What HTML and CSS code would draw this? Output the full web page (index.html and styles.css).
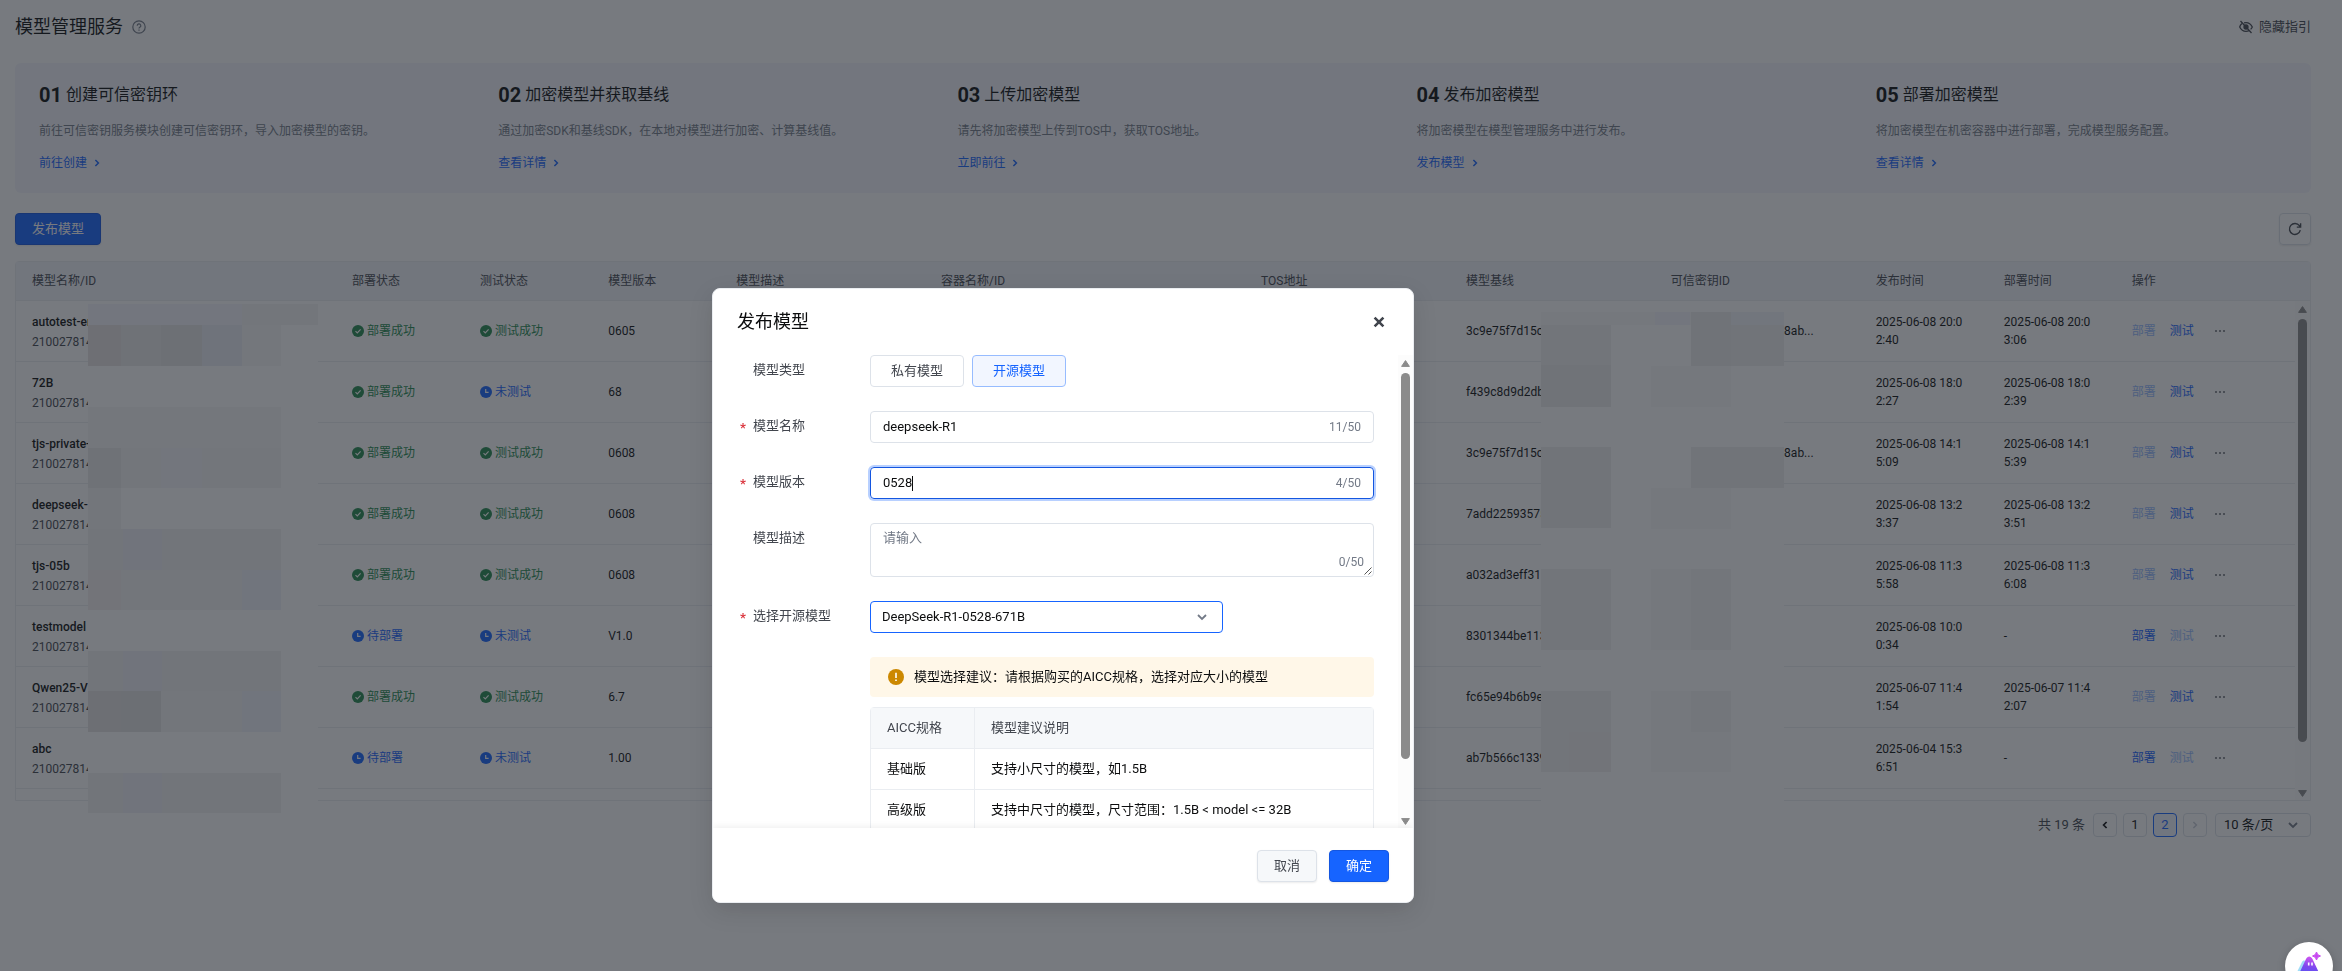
FILE: index.html
```html
<!DOCTYPE html>
<html lang="zh-CN">

<head>
    <meta charset="UTF-8">
    <meta name="viewport" content="width=device-width, initial-scale=1.0">
    <title>模型管理服务</title>
    <link rel="stylesheet" href="styles.css">
</head>

<body>

    <!-- 图标 -->
    <svg class="sprite" aria-hidden="true">
        <symbol id="i-ok" viewBox="0 0 12 12">
            <circle cx="6" cy="6" r="6" fill="currentColor" />
            <path d="M3.5 6.1l1.8 1.8 3.3-3.5" fill="none" stroke="#fff" stroke-width="1.2" />
        </symbol>
        <symbol id="i-wait" viewBox="0 0 12 12">
            <circle cx="6" cy="6" r="6" fill="currentColor" />
            <path d="M5.7 3v3.4h2.9" fill="none" stroke="#fff" stroke-width="1.2" />
        </symbol>
        <symbol id="i-right" viewBox="0 0 12 12">
            <path d="M4.4 3l3 3-3 3" fill="none" stroke="currentColor" stroke-width="1.5" />
        </symbol>
        <symbol id="i-left" viewBox="0 0 12 12">
            <path d="M7.6 3l-3 3 3 3" fill="none" stroke="currentColor" stroke-width="1.7" />
        </symbol>
        <symbol id="i-down" viewBox="0 0 12 12">
            <path d="M2 4l4 4 4-4" fill="none" stroke="currentColor" stroke-width="1.8" />
        </symbol>
        <symbol id="i-more" viewBox="0 0 12 12">
            <path d="M1.2 5.2h1.6v1.6H1.2zM5.2 5.2h1.6v1.6H5.2zM9.2 5.2h1.6v1.6H9.2z" fill="currentColor" />
        </symbol>
        <symbol id="i-up-arrow" viewBox="0 0 9 7">
            <path d="M4.5 0.6L8.4 6.4H.6z" fill="currentColor" stroke="currentColor" stroke-linejoin="round" />
        </symbol>
        <symbol id="i-down-arrow" viewBox="0 0 9 7">
            <path d="M4.5 6.4L.6.6h7.8z" fill="currentColor" stroke="currentColor" stroke-linejoin="round" />
        </symbol>
    </svg>

    <main class="page">
        <header class="page-header">
            <h1>模型管理服务</h1>
            <svg class="icon-14 help" viewBox="0 0 14 14" fill="none" stroke="currentColor" stroke-width="1.2">
                <circle cx="7" cy="7" r="6.2" />
                <path d="M5.2 5.7a1.8 1.8 0 1 1 2.6 1.6c-.6.3-.8.5-.8 1.2M7 9.4v1.3" />
            </svg>
            <button class="hide-guide" type="button">
                <svg class="icon-14" viewBox="0 0 14 14" fill="none" stroke="currentColor" stroke-width="1.3">
                    <path d="M2.9 3.6C1.8 4.5 1 5.8.7 7c1.4 2.9 3.6 4.3 6.3 4.3 1.1 0 2.1-.2 3-.7M5 2.9c.6-.1 1.3-.2 2-.2 2.7 0 4.9 1.400 6.300 4.300-.4.9-1 1.700-1.700 2.400" />
                    <circle cx="7" cy="7" r="2" fill="currentColor" />
                    <path d="M1.5 1l11 12" />
                </svg>
                隐藏指引
            </button>
        </header>

        <section class="guide">
            <div class="step">
                <h2><b>01</b>创建可信密钥环</h2>
                <p>前往可信密钥服务模块创建可信密钥环，导入加密模型的密钥。</p>
                <a href="#">前往创建<svg class="icon-12"><use href="#i-right" /></svg></a>
            </div>
            <div class="step">
                <h2><b>02</b>加密模型并获取基线</h2>
                <p>通过加密SDK和基线SDK，在本地对模型进行加密、计算基线值。</p>
                <a href="#">查看详情<svg class="icon-12"><use href="#i-right" /></svg></a>
            </div>
            <div class="step">
                <h2><b>03</b>上传加密模型</h2>
                <p>请先将加密模型上传到TOS中，获取TOS地址。</p>
                <a href="#">立即前往<svg class="icon-12"><use href="#i-right" /></svg></a>
            </div>
            <div class="step">
                <h2><b>04</b>发布加密模型</h2>
                <p>将加密模型在模型管理服务中进行发布。</p>
                <a href="#">发布模型<svg class="icon-12"><use href="#i-right" /></svg></a>
            </div>
            <div class="step">
                <h2><b>05</b>部署加密模型</h2>
                <p>将加密模型在机密容器中进行部署，完成模型服务配置。</p>
                <a href="#">查看详情<svg class="icon-12"><use href="#i-right" /></svg></a>
            </div>
        </section>

        <div class="toolbar">
            <button class="btn btn-primary" type="button">发布模型</button>
            <button class="btn btn-icon" type="button" aria-label="刷新">
                <svg class="icon-14" viewBox="0 0 14 14" fill="none" stroke="currentColor" stroke-width="1.4">
                    <path d="M12.3 8.2A5.5 5.5 0 1 1 11.4 3.7l1 1.2M12.6 1.2v3.9H8.8" />
                </svg>
            </button>
        </div>

        <div class="table-box">
            <table class="model-table">
                <colgroup>
                    <col class="w-250"><col class="w-100"><col class="w-100"><col class="w-100">
                    <col class="w-160"><col class="w-250"><col class="w-160"><col class="w-160">
                    <col class="w-160"><col class="w-100"><col class="w-100"><col class="w-140">
                </colgroup>
                <thead>
                    <tr>
                        <th>模型名称/ID</th>
                        <th>部署状态</th>
                        <th>测试状态</th>
                        <th>模型版本</th>
                        <th>模型描述</th>
                        <th>容器名称/ID</th>
                        <th>TOS地址</th>
                        <th>模型基线</th>
                        <th>可信密钥ID</th>
                        <th>发布时间</th>
                        <th>部署时间</th>
                        <th>操作</th>
                    </tr>
                </thead>
                <tbody>
                    <tr>
                        <td><strong>autotest-er</strong><span class="model-id">210027814</span></td>
                        <td><span class="tag ok"><svg class="icon-12"><use href="#i-ok" /></svg>部署成功</span></td>
                        <td><span class="tag ok"><svg class="icon-12"><use href="#i-ok" /></svg>测试成功</span></td>
                        <td>0605</td>
                        <td></td>
                        <td></td>
                        <td></td>
                        <td>3c9e75f7d15c</td>
                        <td class="key-id">-8ab...</td>
                        <td class="time">2025-06-08 20:02:40</td>
                        <td class="time">2025-06-08 20:03:06</td>
                        <td><div class="ops"><button type="button" disabled>部署</button><button type="button">测试</button><button type="button" class="more" aria-label="更多"><svg class="icon-12"><use href="#i-more" /></svg></button></div></td>
                    </tr>
                    <tr>
                        <td><strong>72B</strong><span class="model-id">210027814</span></td>
                        <td><span class="tag ok"><svg class="icon-12"><use href="#i-ok" /></svg>部署成功</span></td>
                        <td><span class="tag wait"><svg class="icon-12"><use href="#i-wait" /></svg>未测试</span></td>
                        <td>68</td>
                        <td></td>
                        <td></td>
                        <td></td>
                        <td>f439c8d9d2db</td>
                        <td></td>
                        <td class="time">2025-06-08 18:02:27</td>
                        <td class="time">2025-06-08 18:02:39</td>
                        <td><div class="ops"><button type="button" disabled>部署</button><button type="button">测试</button><button type="button" class="more" aria-label="更多"><svg class="icon-12"><use href="#i-more" /></svg></button></div></td>
                    </tr>
                    <tr>
                        <td><strong>tjs-private-</strong><span class="model-id">210027814</span></td>
                        <td><span class="tag ok"><svg class="icon-12"><use href="#i-ok" /></svg>部署成功</span></td>
                        <td><span class="tag ok"><svg class="icon-12"><use href="#i-ok" /></svg>测试成功</span></td>
                        <td>0608</td>
                        <td></td>
                        <td></td>
                        <td></td>
                        <td>3c9e75f7d15c</td>
                        <td class="key-id">-8ab...</td>
                        <td class="time">2025-06-08 14:15:09</td>
                        <td class="time">2025-06-08 14:15:39</td>
                        <td><div class="ops"><button type="button" disabled>部署</button><button type="button">测试</button><button type="button" class="more" aria-label="更多"><svg class="icon-12"><use href="#i-more" /></svg></button></div></td>
                    </tr>
                    <tr>
                        <td><strong>deepseek-</strong><span class="model-id">210027814</span></td>
                        <td><span class="tag ok"><svg class="icon-12"><use href="#i-ok" /></svg>部署成功</span></td>
                        <td><span class="tag ok"><svg class="icon-12"><use href="#i-ok" /></svg>测试成功</span></td>
                        <td>0608</td>
                        <td></td>
                        <td></td>
                        <td></td>
                        <td>7add22593575</td>
                        <td></td>
                        <td class="time">2025-06-08 13:23:37</td>
                        <td class="time">2025-06-08 13:23:51</td>
                        <td><div class="ops"><button type="button" disabled>部署</button><button type="button">测试</button><button type="button" class="more" aria-label="更多"><svg class="icon-12"><use href="#i-more" /></svg></button></div></td>
                    </tr>
                    <tr>
                        <td><strong>tjs-05b</strong><span class="model-id">210027814</span></td>
                        <td><span class="tag ok"><svg class="icon-12"><use href="#i-ok" /></svg>部署成功</span></td>
                        <td><span class="tag ok"><svg class="icon-12"><use href="#i-ok" /></svg>测试成功</span></td>
                        <td>0608</td>
                        <td></td>
                        <td></td>
                        <td></td>
                        <td>a032ad3eff311</td>
                        <td></td>
                        <td class="time">2025-06-08 11:35:58</td>
                        <td class="time">2025-06-08 11:36:08</td>
                        <td><div class="ops"><button type="button" disabled>部署</button><button type="button">测试</button><button type="button" class="more" aria-label="更多"><svg class="icon-12"><use href="#i-more" /></svg></button></div></td>
                    </tr>
                    <tr>
                        <td><strong>testmodel</strong><span class="model-id">210027814</span></td>
                        <td><span class="tag wait"><svg class="icon-12"><use href="#i-wait" /></svg>待部署</span></td>
                        <td><span class="tag wait"><svg class="icon-12"><use href="#i-wait" /></svg>未测试</span></td>
                        <td>V1.0</td>
                        <td></td>
                        <td></td>
                        <td></td>
                        <td>8301344be113</td>
                        <td></td>
                        <td class="time">2025-06-08 10:00:34</td>
                        <td class="time">-</td>
                        <td><div class="ops"><button type="button">部署</button><button type="button" disabled>测试</button><button type="button" class="more" aria-label="更多"><svg class="icon-12"><use href="#i-more" /></svg></button></div></td>
                    </tr>
                    <tr>
                        <td><strong>Qwen25-V</strong><span class="model-id">210027814</span></td>
                        <td><span class="tag ok"><svg class="icon-12"><use href="#i-ok" /></svg>部署成功</span></td>
                        <td><span class="tag ok"><svg class="icon-12"><use href="#i-ok" /></svg>测试成功</span></td>
                        <td>6.7</td>
                        <td></td>
                        <td></td>
                        <td></td>
                        <td>fc65e94b6b9e</td>
                        <td></td>
                        <td class="time">2025-06-07 11:41:54</td>
                        <td class="time">2025-06-07 11:42:07</td>
                        <td><div class="ops"><button type="button" disabled>部署</button><button type="button">测试</button><button type="button" class="more" aria-label="更多"><svg class="icon-12"><use href="#i-more" /></svg></button></div></td>
                    </tr>
                    <tr>
                        <td><strong>abc</strong><span class="model-id">210027814</span></td>
                        <td><span class="tag wait"><svg class="icon-12"><use href="#i-wait" /></svg>待部署</span></td>
                        <td><span class="tag wait"><svg class="icon-12"><use href="#i-wait" /></svg>未测试</span></td>
                        <td>1.00</td>
                        <td></td>
                        <td></td>
                        <td></td>
                        <td>ab7b566c1339</td>
                        <td></td>
                        <td class="time">2025-06-04 15:36:51</td>
                        <td class="time">-</td>
                        <td><div class="ops"><button type="button">部署</button><button type="button" disabled>测试</button><button type="button" class="more" aria-label="更多"><svg class="icon-12"><use href="#i-more" /></svg></button></div></td>
                    </tr>
                </tbody>
            </table>
            <div class="table-side">
                <div class="table-side-head"></div>
                <div class="scrollbar">
                    <svg class="arrow"><use href="#i-up-arrow" /></svg>
                    <div class="track"><div class="thumb thumb-table"></div></div>
                    <svg class="arrow"><use href="#i-down-arrow" /></svg>
                </div>
            </div>

            <!-- 敏感信息打码 -->
            <svg class="mosaic mosaic-name" viewBox="0 0 230 524">
                <rect width="230" height="524" fill="#fff" />
                <rect width="154" height="21" fill="#f5f6fd" />
                <rect x="154" width="76" height="21" fill="#f6f6f6" />
                <rect y="21" width="33" height="41" fill="#e8e4e4" />
                <rect x="33" y="21" width="40" height="41" fill="#eaeaea" />
                <rect x="73" y="21" width="41" height="41" fill="#e6e6e6" />
                <rect x="114" y="21" width="40" height="41" fill="#ebedf6" />
                <rect x="154" y="21" width="39" height="41" fill="#f7f7f7" />
                <rect y="103" width="193" height="41" fill="#f7f7f7" />
                <rect y="144" width="33" height="40" fill="#ebebeb" />
                <rect x="33" y="144" width="160" height="40" fill="#f6f6f6" />
                <rect x="73" y="144" width="41" height="40" fill="#f4f5fa" />
                <rect y="184" width="33" height="41" fill="#f5f5f5" />
                <rect y="225" width="193" height="41" fill="#f2f2f2" />
                <rect x="35" y="225" width="39" height="41" fill="#eff0f8" />
                <rect y="266" width="193" height="40" fill="#f4f4f4" />
                <rect y="266" width="33" height="40" fill="#f4f1f0" />
                <rect x="154" y="266" width="39" height="40" fill="#f1f3fb" />
                <rect y="347" width="193" height="40" fill="#f2f2f2" />
                <rect x="35" y="347" width="39" height="40" fill="#eff0f8" />
                <rect y="387" width="33" height="41" fill="#e7e4e4" />
                <rect x="33" y="387" width="40" height="41" fill="#e3e3e3" />
                <rect x="73" y="387" width="81" height="41" fill="#f5f5f5" />
                <rect x="154" y="387" width="39" height="41" fill="#f0f2fa" />
                <rect y="469" width="193" height="40" fill="#f2f2f2" />
                <rect x="35" y="469" width="39" height="40" fill="#eff0f8" />
            </svg>
            <svg class="mosaic mosaic-key" viewBox="0 0 243 522">
                <rect width="243" height="522" fill="#fff" />
                <rect width="150" height="13" fill="#f9f9f9" />
                <rect x="114" width="35" height="13" fill="#f4f6fc" />
                <rect x="190" width="53" height="13" fill="#f3f4fa" />
                <rect y="13" width="70" height="40" fill="#f3f3f3" />
                <rect y="53" width="70" height="42" fill="#eee" />
                <rect x="150" width="40" height="54" fill="#eee" />
                <rect x="190" y="13" width="53" height="41" fill="#efefef" />
                <rect x="110" y="54" width="80" height="41" fill="#fafafa" />
                <rect y="135" width="70" height="81" fill="#f0f0f0" />
                <rect x="150" y="135" width="93" height="41" fill="#efefef" />
                <rect x="110" y="176" width="80" height="41" fill="#fafafa" />
                <rect y="257" width="70" height="81" fill="#f2f2f2" />
                <rect x="110" y="257" width="40" height="81" fill="#fbfbfb" />
                <rect x="150" y="257" width="40" height="81" fill="#f5f5f5" />
                <rect y="379" width="70" height="81" fill="#f2f2f2" />
                <rect x="28" y="420" width="42" height="40" fill="#f3f0f0" />
                <rect x="110" y="379" width="80" height="81" fill="#f9f9f9" />
                <rect x="150" y="379" width="40" height="41" fill="#f4f4f4" />
            </svg>
        </div>

        <nav class="pagination">
            <span class="total">共 19 条</span>
            <button type="button" aria-label="上一页"><svg class="icon-12"><use href="#i-left" /></svg></button>
            <button type="button">1</button>
            <button type="button" class="current">2</button>
            <button type="button" disabled aria-label="下一页"><svg class="icon-12"><use href="#i-right" /></svg></button>
            <div class="select page-size">
                <select aria-label="每页条数"><option>10 条/页</option></select>
                <svg class="icon-12"><use href="#i-down" /></svg>
            </div>
        </nav>
    </main>

    <div class="mask">
        <form class="modal">
            <div class="modal-header">
                <h2>发布模型</h2>
                <button class="close" type="button" aria-label="关闭">
                    <svg class="icon-12" viewBox="0 0 12 12"><path d="M1.6 1.6l8.8 8.8M10.4 1.6l-8.8 8.8" stroke="currentColor" stroke-width="2.6" /></svg>
                </button>
            </div>

            <div class="modal-body">
                <div class="fields">
                    <div class="field">
                        <span class="label">模型类型</span>
                        <div class="radios">
                            <label><input type="radio" name="type"><span>私有模型</span></label>
                            <label><input type="radio" name="type" checked><span>开源模型</span></label>
                        </div>
                    </div>
                    <div class="field">
                        <label class="label required" for="name">模型名称</label>
                        <div class="input">
                            <input id="name" type="text" value="deepseek-R1">
                            <span class="count">11/50</span>
                        </div>
                    </div>
                    <div class="field">
                        <label class="label required" for="version">模型版本</label>
                        <div class="input focused">
                            <input id="version" type="text" value="0528">
                            <span class="caret"></span>
                            <span class="count">4/50</span>
                        </div>
                    </div>
                    <div class="field">
                        <label class="label" for="desc">模型描述</label>
                        <div class="textarea">
                            <textarea id="desc" placeholder="请输入"></textarea>
                            <span class="count">0/50</span>
                            <svg class="resize" viewBox="0 0 8 8"><path d="M.5 7.5l7-7M4.5 7.5l3-3" stroke="#555" stroke-width="1" /></svg>
                        </div>
                    </div>
                    <div class="field">
                        <label class="label required" for="base">选择开源模型</label>
                        <div class="control">
                            <div class="select base-model">
                                <select id="base"><option>DeepSeek-R1-0528-671B</option></select>
                                <svg class="icon-12"><use href="#i-down" /></svg>
                            </div>
                            <div class="alert">
                                <svg class="icon-16" viewBox="0 0 16 16">
                                    <circle cx="8" cy="8" r="8" fill="#cc8800" />
                                    <path d="M8 3.8v5.200M8 10.400v1.700" stroke="#fff" stroke-width="1.6" />
                                </svg>
                                模型选择建议：请根据购买的AICC规格，选择对应大小的模型
                            </div>
                            <table class="spec-table">
                                <thead>
                                    <tr><th>AICC规格</th><th>模型建议说明</th></tr>
                                </thead>
                                <tbody>
                                    <tr><td>基础版</td><td>支持小尺寸的模型，如1.5B</td></tr>
                                    <tr><td>高级版</td><td>支持中尺寸的模型，尺寸范围：1.5B &lt; model &lt;= 32B</td></tr>
                                </tbody>
                            </table>
                        </div>
                    </div>
                </div>
                <div class="scrollbar">
                    <svg class="arrow"><use href="#i-up-arrow" /></svg>
                    <div class="track"><div class="thumb thumb-modal"></div></div>
                    <svg class="arrow"><use href="#i-down-arrow" /></svg>
                </div>
            </div>

            <div class="modal-footer">
                <button class="btn btn-default" type="button">取消</button>
                <button class="btn btn-primary" type="button">确定</button>
            </div>
        </form>
    </div>

    <!-- 智能助手 -->
    <button class="assistant" type="button" aria-label="智能助手">
        <svg viewBox="0 0 48 48">
            <defs>
                <linearGradient id="g-body" x1="0.6" y1="0" x2="0.4" y2="1">
                    <stop offset="0" stop-color="#d455f0" />
                    <stop offset="0.5" stop-color="#7a48ee" />
                    <stop offset="1" stop-color="#4a5cf5" />
                </linearGradient>
            </defs>
            <path d="M10 34l7-14c1-2 3-2 4 0l6 14z" fill="#9fdcf7" />
            <path d="M12 36l9-19c1.500-3.500 5-3.500 6.500 0l9 19z" fill="url(#g-body)" />
            <path d="M23.700 20.500v3M27 20.500v3" stroke="#fff" stroke-width="1.6" />
            <path d="M31.500 10q.6 3.400 4 4-3.400.6-4 4-.6-3.400-4-4 3.400-.6 4-4z" fill="#c84af0" stroke="#c84af0" />
        </svg>
    </button>

</body>

</html>
```
FILE: styles.css
```css
* {
    box-sizing: border-box;
}

body, html {
    margin: 0;
    padding: 0;
    height: 100%;
    overflow: hidden;
}

body {
    background: #fff;
    color: #0c0d0e;
    font-family: Roboto, "Noto Sans CJK SC", sans-serif;
    font-size: 12px;
    line-height: 20px;
}

h1, h2, p {
    margin: 0;
    font-weight: 400;
}

a {
    color: #1664ff;
    text-decoration: none;
}

button, input, select, textarea {
    font: inherit;
    color: inherit;
    margin: 0;
    padding: 0;
    border: none;
    background: none;
    outline: none;
}

.sprite {
    display: none;
}

.icon-12 {
    flex: none;
    width: 12px;
    height: 12px;
}

.icon-14 {
    flex: none;
    width: 14px;
    height: 14px;
}

.icon-16 {
    flex: none;
    width: 16px;
    height: 16px;
}

/* 页面 */
.page {
    padding: 14px 31px 0 15px;
}

.page-header {
    display: flex;
    align-items: center;
    margin-bottom: 23px;
}

    .page-header h1 {
        font-size: 18px;
        line-height: 26px;
    }

.help {
    margin-left: 9px;
    color: #737a87;
}

.hide-guide {
    display: flex;
    align-items: center;
    gap: 6px;
    margin-left: auto;
    color: #42464e;
    font-size: 13px;
}

.guide {
    display: grid;
    grid-template-columns: repeat(5, 1fr);
    background: #f4f6fc;
    border-radius: 6px;
}

.step {
    padding: 20px 0 20px 24px;
}

    .step h2 {
        display: flex;
        align-items: center;
        gap: 4px;
        font-size: 16px;
        line-height: 24px;
    }

    .step b {
        font-size: 20px;
        font-weight: 700;
    }

    .step p {
        margin: 14px 0 12px;
        color: #737a87;
    }

    .step a {
        display: flex;
        align-items: center;
        gap: 4px;
    }

.toolbar {
    display: flex;
    justify-content: space-between;
    margin: 20px 0 16px;
}

.btn {
    height: 32px;
    padding: 0 16px;
    border: 1px solid #dde2e9;
    border-radius: 4px;
    font-size: 13px;
    box-shadow: 0 1px 2px rgba(0,0,0,0.08);
}

.btn-primary {
    background: #1664ff;
    border-color: #1456e0;
    color: #fff;
}

.btn-default {
    background: #f6f8fa;
    color: #42464e;
}

.btn-icon {
    display: flex;
    align-items: center;
    justify-content: center;
    width: 32px;
    padding: 0;
    color: #42464e;
}

/* 模型列表 */
.table-box {
    position: relative;
    display: flex;
    border: 1px solid #eaedf1;
    border-radius: 4px 4px 0 0;
}

.model-table {
    flex: 1;
    width: 100%;
    min-width: 0;
    margin-bottom: 11px;
    table-layout: fixed;
    border-collapse: separate;
    border-spacing: 0;
}

.w-100 {
    width: 100px;
}

.w-140 {
    width: 140px;
}

.w-160 {
    width: 160px;
}

.w-250 {
    width: 250px;
}

.model-table th {
    height: 39px;
    padding: 0 16px;
    background: #f2f4fa;
    border-bottom: 1px solid #eaedf1;
    color: #42464e;
    font-weight: 400;
    text-align: left;
}

.model-table td {
    height: 61px;
    padding: 0 16px;
    border-bottom: 1px solid #eaedf1;
}

    .model-table td:first-child {
        padding-top: 2px;
    }

    .model-table td strong {
        display: block;
        font-weight: 500;
    }

.model-id {
    display: block;
    color: #42464e;
}

.model-table .time {
    padding-right: 20px;
    line-height: 18px;
    word-break: break-all;
}

.model-table .key-id {
    padding-right: 46px;
    text-align: right;
}

.tag {
    display: flex;
    align-items: center;
    gap: 3px;
}

.ok {
    color: #238a4e;
}

.wait {
    color: #1664ff;
}

.ops {
    display: flex;
    align-items: center;
    gap: 14px;
    color: #1664ff;
}

    .ops button:disabled {
        color: #97bcff;
    }

    .ops .more {
        display: flex;
        margin-left: 6px;
        color: #42464e;
    }

.table-side {
    display: flex;
    flex-direction: column;
    width: 15px;
}

.table-side-head {
    height: 39px;
    background: #f2f4fa;
    border-bottom: 1px solid #eaedf1;
}

.scrollbar {
    display: flex;
    flex: 1;
    flex-direction: column;
    align-items: center;
    gap: 6px;
    padding: 5px 0 3px;
    background: #fcfcfc;
    color: #8b8b8b;
}

.arrow {
    width: 9px;
    height: 7px;
}

.track {
    flex: 1;
    width: 9px;
}

.thumb {
    border-radius: 5px;
    background: #8b8b8b;
}

.thumb-table {
    height: 91%;
}

.thumb-modal {
    height: 88%;
}

.mosaic {
    position: absolute;
}

.mosaic-name {
    left: 72px;
    top: 42px;
    width: 230px;
}

.mosaic-key {
    right: 526px;
    top: 50px;
    width: 243px;
}

/* 分页 */
.pagination {
    display: flex;
    align-items: center;
    justify-content: flex-end;
    gap: 6px;
    margin-top: 12px;
    font-size: 13px;
}

    .pagination button {
        display: flex;
        align-items: center;
        justify-content: center;
        width: 24px;
        height: 24px;
        border: 1px solid #dde2e9;
        border-radius: 4px;
    }

        .pagination button.current {
            border-color: #1664ff;
            background: #f0f4ff;
            color: #1664ff;
        }

        .pagination button:disabled {
            color: #c7ccd6;
        }

.total {
    margin-right: 2px;
    color: #42464e;
}

.select {
    display: flex;
    align-items: center;
    position: relative;
    border: 1px solid #dde2e9;
    border-radius: 4px;
    color: #0c0d0e;
}

    .select select {
        width: 100%;
        height: 100%;
        padding: 0 8px;
        appearance: none;
    }

    .select .icon-12 {
        position: absolute;
        right: 11px;
        color: #737a87;
        pointer-events: none;
    }

.page-size {
    width: 96px;
    height: 24px;
    margin-left: 2px;
}

/* 弹窗 */
.mask {
    position: fixed;
    inset: 0;
    display: flex;
    align-items: flex-start;
    justify-content: center;
    padding: 288px 216px 0 0;
    background: rgba(29,33,41,0.6);
    font-size: 13px;
}

.modal {
    width: 702px;
    overflow: hidden;
    border: 1px solid #eaedf1;
    border-radius: 8px;
    background: #fff;
    box-shadow: 0 8px 24px rgba(0,0,0,0.12);
}

.modal-header {
    display: flex;
    align-items: center;
    justify-content: space-between;
    padding: 20px 28px 20px 24px;
}

    .modal-header h2 {
        font-size: 18px;
        line-height: 26px;
    }

.close {
    display: flex;
    color: #42464e;
}

.modal-body {
    display: flex;
    height: 473px;
    overflow: hidden;
}

.fields {
    display: flex;
    flex: 1;
    flex-direction: column;
    gap: 24px;
    padding: 0 24px;
}

.field {
    display: flex;
    align-items: flex-start;
}

.label {
    position: relative;
    width: 133px;
    padding-left: 16px;
    color: #42464e;
    line-height: 30px;
}

.required::before {
    content: "*";
    position: absolute;
    left: 3px;
    top: 2px;
    color: #db373f;
    font-weight: 700;
}

.radios {
    display: flex;
    gap: 8px;
}

    .radios input {
        position: absolute;
        opacity: 0;
    }

    .radios span {
        display: block;
        padding: 0 20px;
        border: 1px solid #dde2e9;
        border-radius: 4px;
        color: #42464e;
        line-height: 30px;
    }

    .radios input:checked + span {
        border-color: #97bcff;
        background: #f2f6ff;
        color: #1664ff;
    }

.input {
    position: relative;
    display: flex;
    flex: 1;
    align-items: center;
    height: 32px;
    padding: 0 12px;
    border: 1px solid #dde2e9;
    border-radius: 4px;
}

    .input input {
        flex: 1;
        min-width: 0;
    }

.focused {
    border-color: #1456e0;
    box-shadow: 0 0 0 2px #b8d0ff;
}

.caret {
    position: absolute;
    left: 41px;
    width: 1px;
    height: 15px;
    background: #0c0d0e;
}

.count {
    color: #737a87;
    font-size: 12px;
}

.textarea {
    position: relative;
    display: flex;
    flex: 1;
    height: 54px;
    border: 1px solid #dde2e9;
    border-radius: 4px;
}

    .textarea textarea {
        flex: 1;
        padding: 4px 12px;
        resize: none;
    }

        .textarea textarea::placeholder {
            color: #737a87;
        }

    .textarea .count {
        position: absolute;
        right: 9px;
        bottom: 4px;
    }

.resize {
    position: absolute;
    right: 1px;
    bottom: 1px;
    width: 8px;
    height: 8px;
}

.control {
    flex: 1;
}

.base-model {
    width: 70%;
    height: 32px;
    border-color: #1664ff;
}

    .base-model select {
        padding: 0 11px;
    }

    .base-model .icon-12 {
        right: 14px;
    }

.alert {
    display: flex;
    align-items: center;
    gap: 10px;
    margin: 24px 0 10px;
    padding: 10px 18px;
    border-radius: 4px;
    background: #fff7e8;
}

.spec-table {
    width: 100%;
    border: 1px solid #eaedf1;
    border-radius: 4px;
    border-spacing: 0;
}

    .spec-table th, .spec-table td {
        height: 41px;
        padding: 0 16px;
        border-bottom: 1px solid #eaedf1;
        text-align: left;
    }

        .spec-table th:first-child, .spec-table td:first-child {
            width: 104px;
            border-right: 1px solid #eaedf1;
        }

    .spec-table th {
        background: #f6f8fa;
        color: #42464e;
        font-weight: 400;
    }

.modal .scrollbar {
    flex: none;
    width: 15px;
}

.modal-footer {
    position: relative;
    display: flex;
    justify-content: flex-end;
    gap: 12px;
    padding: 22px 24px 20px;
    background: #fff;
    box-shadow: 0 -2px 6px rgba(0,0,0,0.06);
}

/* 智能助手 */
.assistant {
    position: fixed;
    right: 9px;
    bottom: -19px;
    width: 48px;
    height: 48px;
    border-radius: 50%;
    background: #fff;
    box-shadow: 0 2px 8px rgba(0,0,0,0.2);
}

    .assistant svg {
        display: block;
        width: 48px;
        height: 48px;
    }
```
